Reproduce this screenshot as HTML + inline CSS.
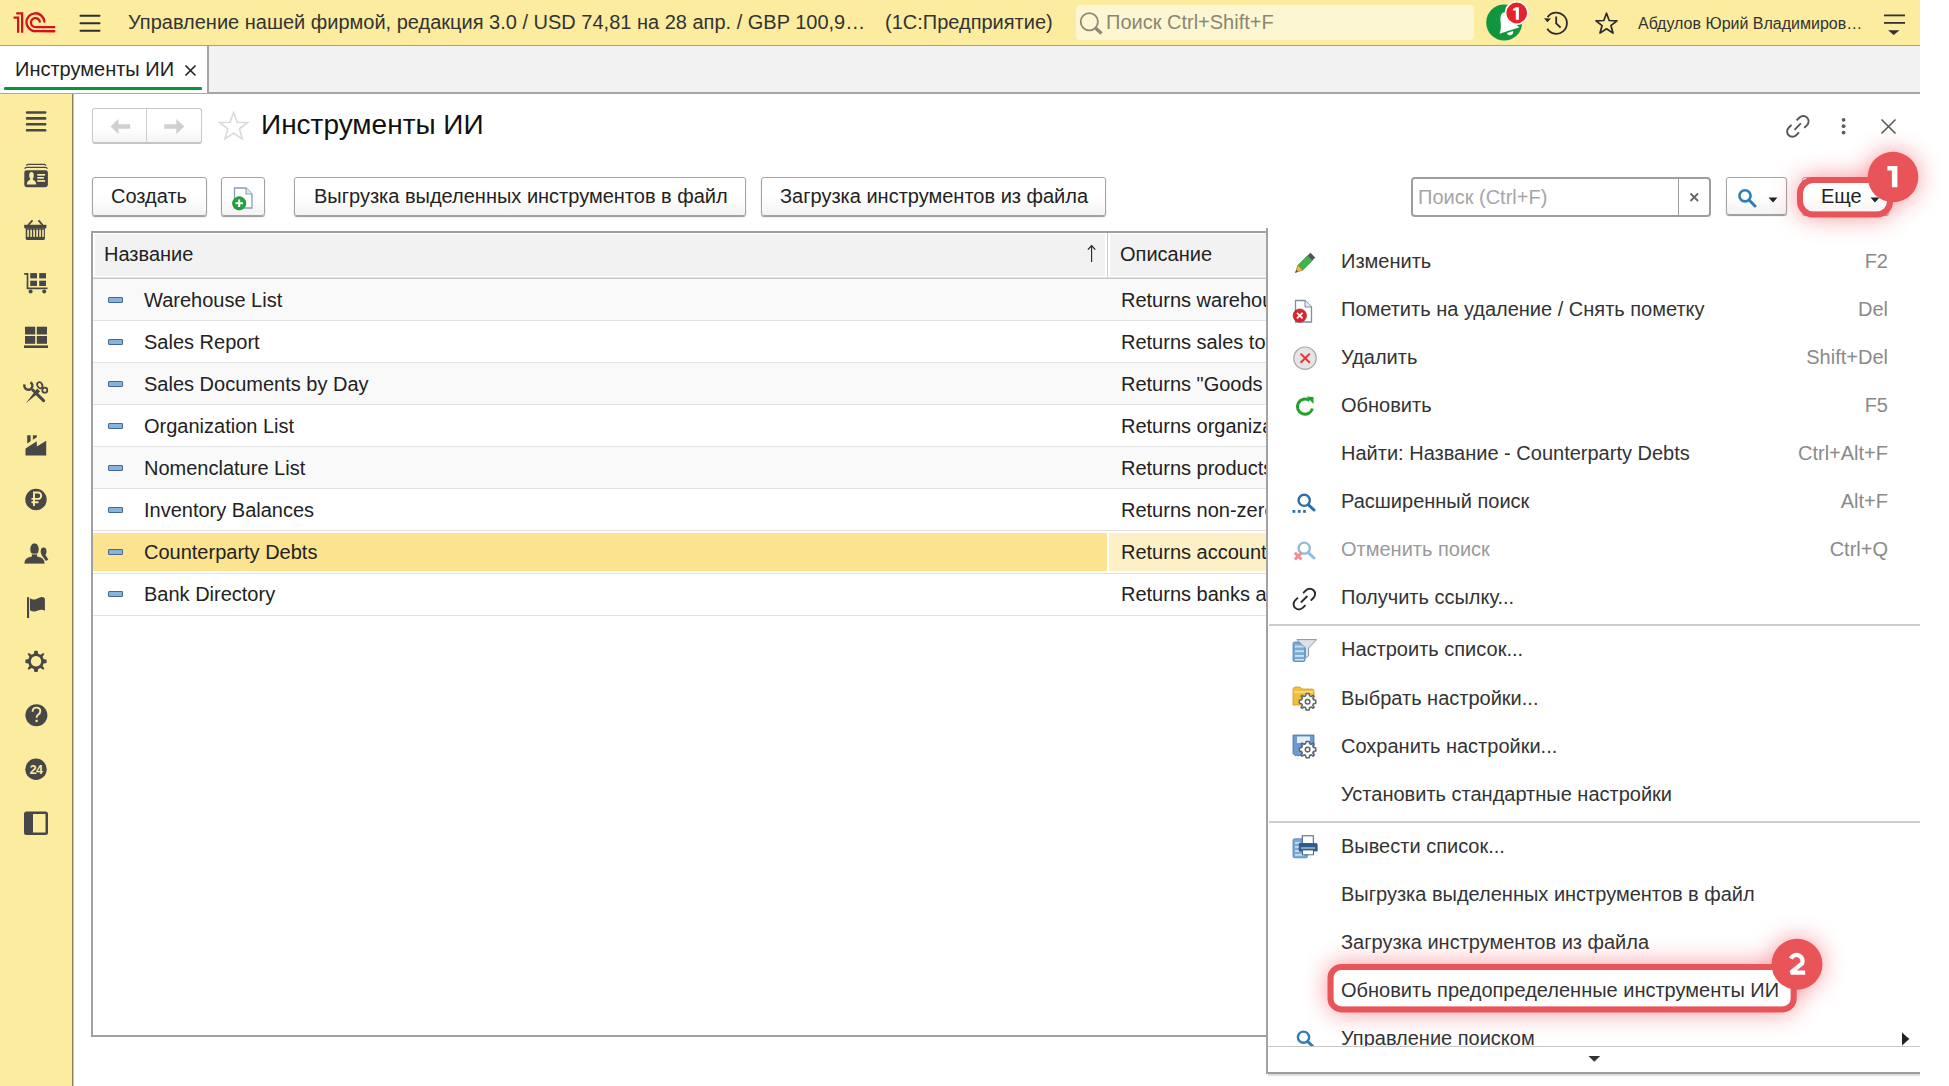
<!DOCTYPE html>
<html><head><meta charset="utf-8">
<style>
*{box-sizing:border-box;margin:0;padding:0}
html,body{width:1949px;height:1086px;overflow:hidden;background:#fff;font-family:"Liberation Sans",sans-serif;color:#333}
.a{position:absolute}
.t{position:absolute;white-space:nowrap;line-height:20px;font-size:20px}
#top{left:0;top:0;width:1920px;height:46px;background:#FBEC9F;border-bottom:1px solid #ADA26B}
#tabs{left:0;top:46px;width:1920px;height:48px;background:#F2F2F2;border-bottom:2px solid #A6A6A6}
#tab1{left:0;top:46px;width:209px;height:47px;background:#fff;border-right:2px solid #A6A6A6}
#side{left:0;top:94px;width:73px;height:992px;background:#FBEC9F;border-right:1px solid #8C8352;box-shadow:1px 0 0 #C9C3A0}
.btn{position:absolute;border:1px solid #A3A3A3;border-radius:3px;background:linear-gradient(#fff,#fff 50%,#F3F3F3);box-shadow:0 1px 1px #959595}
.row{position:absolute;left:93px;width:1174px;height:42px;border-bottom:1px solid #E3E3E3}
.dash{position:absolute;left:108px;width:15px;height:6px;background:#88B3DC;border:1px solid #436A8E;border-radius:1px}
.mi{position:absolute;left:1342px;white-space:nowrap;font-size:20px;line-height:20px;color:#333}
.sc{position:absolute;right:62px;white-space:nowrap;font-size:20px;line-height:20px;color:#8A8A8A;text-align:right}
.ic{position:absolute;fill:#4A4A4A}
</style></head>
<body>
<!-- TOP BAR -->
<div id="top" class="a"></div>
<div class="t" style="left:128px;top:12px;color:#333">Управление нашей фирмой, редакция 3.0 / USD 74,81 на 28 апр. / GBP 100,9…</div>
<div class="t" style="left:885px;top:12px;color:#333">(1С:Предприятие)</div>
<div class="a" style="left:1076px;top:5px;width:398px;height:35px;background:#FDF6D3;border-radius:4px"></div>
<div class="t" style="left:1106px;top:12px;color:#8C8670">Поиск Ctrl+Shift+F</div>
<div class="t" style="left:1638px;top:16px;font-size:16px;line-height:16px;color:#333">Абдулов Юрий Владимиров…</div>

<!-- TABS -->
<div id="tabs" class="a"></div>
<div id="tab1" class="a"></div>
<div class="t" style="left:15px;top:59px;color:#222">Инструменты ИИ</div>
<div class="a" style="left:4px;top:87px;width:198px;height:3px;background:#05963C;border-radius:1px"></div>

<!-- SIDEBAR -->
<div id="side" class="a"></div>
<!-- SIDEBAR ICONS -->
<svg class="a" style="left:0;top:0" width="80" height="1086" viewBox="0 0 80 1086">
<g fill="#474747">
<!-- hamburger 4 -->
<rect x="25.8" y="111.2" width="20.6" height="2.6" rx="1.2"/>
<rect x="25.8" y="117.1" width="20.6" height="2.6" rx="1.2"/>
<rect x="25.8" y="123" width="20.6" height="2.6" rx="1.2"/>
<rect x="25.8" y="129" width="20.6" height="2.6" rx="1.2"/>
<!-- card -->
<path d="M26.4,165.6 Q26.8,164.3 28.3,164.3 H44.2 Q45.6,164.3 46,165.6" fill="none" stroke="#474747" stroke-width="1.3"/>
<path d="M24.6,168.6 Q25.3,167.4 26.8,167.4 H45.3 Q46.8,167.4 47.5,168.6" fill="none" stroke="#474747" stroke-width="1.3"/>
<rect x="24.3" y="170.2" width="23.6" height="17" rx="2.4"/>
<!-- basket -->
<path d="M28.3,225 L32.5,220.3 M42.6,225 L38.5,220.3" stroke="#474747" stroke-width="1.8" fill="none"/>
<rect x="24.2" y="224.8" width="22.2" height="3.6" rx="0.8"/>
<path d="M25.7,228.2 H44.9 V238.4 Q44.9,239.9 43.4,239.9 H27.2 Q25.7,239.9 25.7,238.4 Z"/>
<!-- cart -->
<path d="M24.2,273.9 H27.5 V288.4 H47.5" fill="none" stroke="#474747" stroke-width="1.7"/>
<rect x="30.2" y="273.1" width="6.8" height="5.3"/>
<rect x="39.2" y="273.1" width="6.8" height="5.3"/>
<rect x="30.2" y="280.7" width="6.8" height="5.3"/>
<rect x="39.2" y="280.7" width="6.8" height="5.3"/>
<circle cx="30.6" cy="291.6" r="2"/>
<circle cx="44.2" cy="291.6" r="2"/>
<!-- shelf -->
<rect x="25" y="326.7" width="10.2" height="7.8"/>
<rect x="36.8" y="326.7" width="10.2" height="7.8"/>
<rect x="25" y="336" width="10.2" height="7.8"/>
<rect x="36.8" y="336" width="10.2" height="7.8"/>
<rect x="24" y="345.4" width="24" height="2.6"/>
<!-- tools -->
<path d="M24.6,384.4 A4,4 0 1 0 30.4,382.3" fill="none" stroke="#474747" stroke-width="2.5"/>
<path d="M32.8,390 L43.6,400.6" fill="none" stroke="#474747" stroke-width="3" stroke-linecap="round"/>
<ellipse cx="39.8" cy="385.2" rx="2.4" ry="3.2" transform="rotate(-30 39.8 385.2)" fill="none" stroke="#474747" stroke-width="1.8"/>
<circle cx="44.8" cy="390.2" r="2.5" fill="none" stroke="#474747" stroke-width="1.8"/>
<path d="M25.8,403.2 L37.2,388.6 L40.2,391.6 Z"/>
<!-- factory -->
<path d="M25.5,455.6 V448.5 L36.8,441.3 V446.6 L46.2,440.8 V455.6 Z"/>
<path d="M27.2,435.3 H30.6 V441.2 L27.2,443.4 Z"/>
<path d="M32.9,435.3 H36.8 V437.3 L32.9,439.8 Z"/>
<!-- ruble -->
<circle cx="36" cy="499.5" r="10.7"/>
<!-- people -->
<ellipse cx="43.6" cy="551.5" rx="2.9" ry="4.1"/>
<path d="M41.5,555 L45.5,555 L48.3,559.5 L46,561 Z"/>
<ellipse cx="34.5" cy="549.2" rx="4.6" ry="6.3" stroke="#FBEC9F" stroke-width="0.8"/>
<path d="M31.5,554 H37.5 V556.3 Q44.3,557.3 44.9,562.5 V564 H24.1 V562.5 Q24.7,557.3 31.5,556.3 Z" stroke="#FBEC9F" stroke-width="0.8"/>
<!-- flag -->
<rect x="27" y="597.2" width="2.1" height="20.8"/>
<path d="M30,598.2 Q33,600 35.7,599.2 Q38,598 40.5,597.2 Q43,596.8 44.9,598.5 V610.8 Q43,609.5 40.5,609.8 Q38,610.3 35.7,611.3 Q33,612 30,610.3 Z"/>
<!-- help -->
<circle cx="36.4" cy="715.2" r="11"/>
<!-- 24 -->
<circle cx="36" cy="769.2" r="10.7"/>
<!-- panel -->
<path d="M26.5,811.5 H45.5 A2.5,2.5 0 0 1 48,814 V832.5 A2.5,2.5 0 0 1 45.5,835 H26.5 A2.5,2.5 0 0 1 24,832.5 V814 A2.5,2.5 0 0 1 26.5,811.5 Z M33,814 V832.5 H45.5 V814 Z" fill-rule="evenodd"/>
</g>
<!-- card inner -->
<g fill="#FBEC9F">
<ellipse cx="31.5" cy="175.6" rx="2.3" ry="3.5"/>
<path d="M30.3,178.5 H32.7 L33,179.8 Q36,180.8 36.2,184.4 H26.8 Q27,180.8 30,179.8 Z"/>
<rect x="37.3" y="174" width="7.8" height="1.7"/>
<rect x="37.3" y="177" width="6.6" height="1.7"/>
<rect x="37.3" y="180.1" width="7.8" height="1.7"/>
<!-- basket slots -->
<rect x="27.3" y="229.7" width="1.6" height="7.2"/>
<rect x="30.3" y="229.7" width="1.6" height="7.2"/>
<rect x="33.3" y="229.7" width="1.6" height="7.2"/>
<rect x="36.3" y="229.7" width="1.6" height="7.2"/>
<rect x="39.3" y="229.7" width="1.6" height="7.2"/>
<rect x="42.2" y="229.7" width="1.6" height="7.2"/>
</g>
<!-- ruble glyph -->
<path d="M34,506 V492.5 H38 A3.2,3.2 0 0 1 38,498.9 H31.5 M31.5,502.2 H38.5" fill="none" stroke="#FBEC9F" stroke-width="1.9"/>
<!-- gear -->
<g transform="translate(36,661.3)">
<path d="M-1.6,-10.6 H1.6 L2.2,-7.6 L4.6,-6.6 L7.2,-8.4 L8.4,-7.2 L6.6,-4.6 L7.6,-2.2 L10.6,-1.6 V1.6 L7.6,2.2 L6.6,4.6 L8.4,7.2 L7.2,8.4 L4.6,6.6 L2.2,7.6 L1.6,10.6 H-1.6 L-2.2,7.6 L-4.6,6.6 L-7.2,8.4 L-8.4,7.2 L-6.6,4.6 L-7.6,2.2 L-10.6,1.6 V-1.6 L-7.6,-2.2 L-6.6,-4.6 L-8.4,-7.2 L-7.2,-8.4 L-4.6,-6.6 L-2.2,-7.6 Z M0,-5.2 A5.2,5.2 0 1 0 0.01,-5.2 Z" fill="#474747" fill-rule="evenodd"/>
</g>
<!-- help glyph -->
<path d="M32.6,711.8 Q32.6,707.6 36.5,707.6 Q40.3,707.6 40.3,711.3 Q40.3,713.3 38.3,714.5 Q36.6,715.6 36.6,717.8" fill="none" stroke="#FBEC9F" stroke-width="1.9"/>
<rect x="35.5" y="719.8" width="2.2" height="2.2" fill="#FBEC9F"/>
<text x="36" y="774" font-family="Liberation Sans" font-weight="bold" font-size="12.5" fill="#FBEC9F" text-anchor="middle" letter-spacing="-0.6">24</text>
</svg>


<!-- FORM HEADER -->
<div class="t" style="left:261px;top:111px;font-size:28px;line-height:28px;color:#111">Инструменты ИИ</div>

<!-- TOOLBAR -->
<div class="btn" style="left:92px;top:177px;width:115px;height:39px"></div>
<div class="t" style="left:111px;top:186px;color:#222">Создать</div>
<div class="btn" style="left:221px;top:177px;width:44px;height:39px"></div>
<div class="btn" style="left:294px;top:177px;width:452px;height:39px"></div>
<div class="t" style="left:314px;top:186px;color:#222">Выгрузка выделенных инструментов в файл</div>
<div class="btn" style="left:761px;top:177px;width:345px;height:39px"></div>
<div class="t" style="left:780px;top:186px;color:#222">Загрузка инструментов из файла</div>

<!-- TABLE -->
<div class="a" style="left:91px;top:231px;width:1220px;height:806px;border:2px solid #A0A0A0;border-right:none"></div>
<div class="a" style="left:95px;top:234px;width:1010px;height:42px;background:#F2F2F2"></div>
<div class="a" style="left:1107px;top:233px;width:1px;height:45px;background:#CACACA"></div>
<div class="a" style="left:1110px;top:234px;width:200px;height:42px;background:#F2F2F2"></div>
<div class="a" style="left:93px;top:277px;width:1220px;height:1px;background:#E2E2E2"></div>
<div class="a" style="left:93px;top:278px;width:1220px;height:1px;background:#C6C6C6"></div>
<div class="t" style="left:104px;top:244px;color:#222">Название</div>
<div class="t" style="left:1120px;top:244px;color:#222">Описание</div>
<div class="a" style="left:93px;top:279px;width:1220px;height:41px;background:#F9F9F9"></div>
<div class="a" style="left:93px;top:320px;width:1220px;height:1px;background:#E3E3E3"></div>
<div class="dash" style="top:297px"></div>
<div class="t" style="left:144px;top:290px;color:#222">Warehouse List</div>
<div class="t" style="left:1121px;top:290px;color:#222">Returns warehouse list with addresses</div>
<div class="a" style="left:93px;top:362px;width:1220px;height:1px;background:#E3E3E3"></div>
<div class="dash" style="top:339px"></div>
<div class="t" style="left:144px;top:332px;color:#222">Sales Report</div>
<div class="t" style="left:1121px;top:332px;color:#222">Returns sales totals by period</div>
<div class="a" style="left:93px;top:363px;width:1220px;height:41px;background:#F9F9F9"></div>
<div class="a" style="left:93px;top:404px;width:1220px;height:1px;background:#E3E3E3"></div>
<div class="dash" style="top:381px"></div>
<div class="t" style="left:144px;top:374px;color:#222">Sales Documents by Day</div>
<div class="t" style="left:1121px;top:374px;color:#222">Returns "Goods and services sales" documents</div>
<div class="a" style="left:93px;top:446px;width:1220px;height:1px;background:#E3E3E3"></div>
<div class="dash" style="top:423px"></div>
<div class="t" style="left:144px;top:416px;color:#222">Organization List</div>
<div class="t" style="left:1121px;top:416px;color:#222">Returns organization list</div>
<div class="a" style="left:93px;top:447px;width:1220px;height:41px;background:#F9F9F9"></div>
<div class="a" style="left:93px;top:488px;width:1220px;height:1px;background:#E3E3E3"></div>
<div class="dash" style="top:465px"></div>
<div class="t" style="left:144px;top:458px;color:#222">Nomenclature List</div>
<div class="t" style="left:1121px;top:458px;color:#222">Returns products and services</div>
<div class="a" style="left:93px;top:530px;width:1220px;height:1px;background:#E3E3E3"></div>
<div class="dash" style="top:507px"></div>
<div class="t" style="left:144px;top:500px;color:#222">Inventory Balances</div>
<div class="t" style="left:1121px;top:500px;color:#222">Returns non-zero inventory balances</div>
<div class="a" style="left:93px;top:533px;width:1014px;height:38px;background:#FCE38F"></div>
<div class="a" style="left:1109px;top:533px;width:200px;height:38px;background:#FDF0C6"></div>
<div class="a" style="left:93px;top:573px;width:1220px;height:1px;background:#E3E3E3"></div>
<div class="dash" style="top:549px"></div>
<div class="t" style="left:144px;top:542px;color:#222">Counterparty Debts</div>
<div class="t" style="left:1121px;top:542px;color:#222">Returns accounts receivable</div>
<div class="a" style="left:93px;top:615px;width:1220px;height:1px;background:#E3E3E3"></div>
<div class="dash" style="top:591px"></div>
<div class="t" style="left:144px;top:584px;color:#222">Bank Directory</div>
<div class="t" style="left:1121px;top:584px;color:#222">Returns banks and BIC codes</div>
<!-- FORM CONTROLS -->
<div class="a" style="left:92px;top:108px;width:110px;height:36px;border:1px solid #C9C9C9;border-bottom:2px solid #C4C4C4;border-radius:3px;background:linear-gradient(#fff 55%,#F4F4F4)"></div>
<div class="a" style="left:146px;top:109px;width:1px;height:34px;background:#CFCFCF"></div>
<div class="a" style="left:1411px;top:177px;width:300px;height:40px;border:2px solid #9E9E9E;border-radius:4px;background:#fff"></div>
<div class="a" style="left:1678px;top:179px;width:1px;height:36px;background:#A0A0A0"></div>
<div class="t" style="left:1418px;top:187px;color:#A6A6A6">Поиск (Ctrl+F)</div>
<div class="btn" style="left:1726px;top:177px;width:61px;height:38px"></div>
<div class="btn" style="left:1802px;top:177px;width:87px;height:38px"></div>
<div class="t" style="left:1821px;top:186px;color:#222">Еще</div>
<svg class="a" style="left:0;top:0" width="1949" height="300" viewBox="0 0 1949 300">
<!-- nav arrows -->
<g fill="#CFCFCF">
<path d="M110.5,126.5 L118.5,119 V124.3 H130.2 V128.7 H118.5 V134 Z"/>
<path d="M184.3,126.5 L176.3,119 V124.3 H164.3 V128.7 H176.3 V134 Z"/>
</g>
<!-- star light -->
<path d="M233.6,112.5 L237.2,122.2 L247.5,122.5 L239.4,128.9 L242.2,138.9 L233.6,133.2 L225,138.9 L227.8,128.9 L219.7,122.5 L230,122.2 Z" fill="none" stroke="#D9D9D9" stroke-width="1.6"/>
<!-- link icon form -->
<g fill="none" stroke="#555" stroke-width="1.9" stroke-linecap="butt">
<path d="M1796.6,120.4 L1799.55,117.55 A5.3,5.3 0 0 1 1807.05,125.05 L1804.2,127.9"/>
<path d="M1799,132.4 L1796.15,135.25 A5.3,5.3 0 0 1 1788.65,127.75 L1791.5,124.9"/>
<path d="M1794.4,129.8 L1800.9,123.3"/>
</g>
<g fill="#5A5A5A">
<circle cx="1843.6" cy="119.8" r="1.9"/>
<circle cx="1843.6" cy="126.2" r="1.9"/>
<circle cx="1843.6" cy="132.6" r="1.9"/>
</g>
<path d="M1881.5,119.5 L1895.5,133.5 M1895.5,119.5 L1881.5,133.5" stroke="#5A5A5A" stroke-width="1.6" fill="none"/>
<!-- doc plus icon -->
<path d="M234.5,188 H246 L252,194 V208 H234.5 Z" fill="#fff" stroke="#8A9BB0" stroke-width="1.3"/>
<path d="M246,188 V194 H252" fill="#E6ECF3" stroke="#8A9BB0" stroke-width="1.1"/>
<circle cx="239.2" cy="203.3" r="6.6" fill="#1FA33A" stroke="#0E8A2A" stroke-width="0.8"/>
<path d="M235.5,203.3 H243 M239.2,199.6 V207" stroke="#fff" stroke-width="2"/>
<!-- search clear x -->
<path d="M1690.5,193.5 L1698,201 M1698,193.5 L1690.5,201" stroke="#666" stroke-width="1.8"/>
<!-- search button magnifier -->
<circle cx="1745" cy="195.8" r="5.6" fill="none" stroke="#2F7DB8" stroke-width="2.6"/>
<path d="M1749.3,200.3 L1755,206" stroke="#2F7DB8" stroke-width="3" stroke-linecap="round"/>
<path d="M1768.5,197.5 H1777.5 L1773,202.5 Z" fill="#222"/>
<path d="M1870.5,197.5 H1879.5 L1875,202.5 Z" fill="#222"/>
<!-- sort arrow -->
<path d="M1091.6,245.8 V262" stroke="#222" stroke-width="1.1"/>
<path d="M1087.9,249.6 L1091.6,245.6 L1095.3,249.6" stroke="#222" stroke-width="1.2" fill="none"/>
</svg>

<!-- MENU -->
<div class="a" style="left:1266px;top:228px;width:654px;height:846px;background:#fff;border-left:2px solid #A3A3A3;border-bottom:2px solid #9C9C9C"></div>
<div class="a" style="left:1268px;top:230px;width:652px;height:816px;overflow:hidden">
<div class="t" style="left:73px;top:21px;color:#333">Изменить</div>
<div class="t" style="right:32px;top:21px;color:#8A8A8A">F2</div>
<div class="t" style="left:73px;top:69px;color:#333">Пометить на удаление / Снять пометку</div>
<div class="t" style="right:32px;top:69px;color:#8A8A8A">Del</div>
<div class="t" style="left:73px;top:117px;color:#333">Удалить</div>
<div class="t" style="right:32px;top:117px;color:#8A8A8A">Shift+Del</div>
<div class="t" style="left:73px;top:165px;color:#333">Обновить</div>
<div class="t" style="right:32px;top:165px;color:#8A8A8A">F5</div>
<div class="t" style="left:73px;top:213px;color:#333">Найти: Название - Counterparty Debts</div>
<div class="t" style="right:32px;top:213px;color:#8A8A8A">Ctrl+Alt+F</div>
<div class="t" style="left:73px;top:261px;color:#333">Расширенный поиск</div>
<div class="t" style="right:32px;top:261px;color:#8A8A8A">Alt+F</div>
<div class="t" style="left:73px;top:309px;color:#9A9A9A">Отменить поиск</div>
<div class="t" style="right:32px;top:309px;color:#8A8A8A">Ctrl+Q</div>
<div class="t" style="left:73px;top:357px;color:#333">Получить ссылку...</div>
<div class="t" style="left:73px;top:409px;color:#333">Настроить список...</div>
<div class="t" style="left:73px;top:458px;color:#333">Выбрать настройки...</div>
<div class="t" style="left:73px;top:506px;color:#333">Сохранить настройки...</div>
<div class="t" style="left:73px;top:554px;color:#333">Установить стандартные настройки</div>
<div class="t" style="left:73px;top:606px;color:#333">Вывести список...</div>
<div class="t" style="left:73px;top:654px;color:#333">Выгрузка выделенных инструментов в файл</div>
<div class="t" style="left:73px;top:702px;color:#333">Загрузка инструментов из файла</div>
<div class="t" style="left:73px;top:750px;color:#333">Обновить предопределенные инструменты ИИ</div>
<div class="t" style="left:73px;top:798px;color:#333">Управление поиском</div>
</div>
<div class="a" style="left:1269px;top:624px;width:651px;height:2px;background:#CDCDCD"></div>
<div class="a" style="left:1269px;top:821px;width:651px;height:2px;background:#CDCDCD"></div>
<div class="a" style="left:1268px;top:1046px;width:652px;height:1px;background:#C8C8C8"></div>
<div class="a" style="left:1268px;top:1074px;width:652px;height:3px;background:linear-gradient(rgba(0,0,0,0.18),rgba(0,0,0,0))"></div>
<!-- MENU ICONS -->
<svg class="a" style="left:1268px;top:230px" width="652" height="816" viewBox="1268 230 652 816">
<!-- pencil -->
<g transform="translate(1303.5,264.5) rotate(-45)">
<rect x="-4.5" y="-3.4" width="13.5" height="6.8" fill="#3DB54A" stroke="#2E7D32" stroke-width="0.6"/>
<rect x="9" y="-3.4" width="4.2" height="6.8" fill="#4A5560"/>
<path d="M-4.5,-3.4 L-11.2,0 L-4.5,3.4 Z" fill="#F4B63F" stroke="#9C6B1E" stroke-width="0.6"/>
<path d="M-8.8,-1.2 L-12,0 L-8.8,1.2 Z" fill="#555"/>
</g>
<!-- mark delete doc -->
<path d="M1295.5,300.5 H1305 L1311.5,307 V322 H1295.5 Z" fill="#fff" stroke="#7E8FA6" stroke-width="1.3"/>
<path d="M1305,300.5 V307 H1311.5" fill="#E8EDF3" stroke="#7E8FA6" stroke-width="1"/>
<circle cx="1299.8" cy="315.6" r="6.7" fill="#D8262E" stroke="#B01820" stroke-width="0.6"/>
<path d="M1297,312.8 L1302.6,318.4 M1302.6,312.8 L1297,318.4" stroke="#fff" stroke-width="1.7"/>
<!-- delete -->
<circle cx="1305" cy="358.2" r="11.2" fill="#E5E5E5" stroke="#A9A9A9" stroke-width="1.2"/>
<path d="M1300.6,353.6 L1309.8,362.8 M1309.8,353.6 L1300.6,362.8" stroke="#E8303C" stroke-width="2"/>
<!-- refresh -->
<path d="M1312.4,408.5 A7.6,7.6 0 1 1 1309.5,400.5" fill="none" stroke="#21A12C" stroke-width="3"/>
<path d="M1306.5,396.5 L1313.5,397 L1313.5,404 Z" fill="#21A12C"/>
<!-- adv search -->
<circle cx="1304.2" cy="500.3" r="5.6" fill="none" stroke="#2D6FA8" stroke-width="2.4"/>
<path d="M1308.5,504.8 L1314,510" stroke="#2D6FA8" stroke-width="3" stroke-linecap="round"/>
<rect x="1292.5" y="510" width="2.8" height="2.8" fill="#2D6FA8"/>
<rect x="1297.8" y="510" width="2.8" height="2.8" fill="#2D6FA8"/>
<rect x="1303.1" y="510" width="2.8" height="2.8" fill="#2D6FA8"/>
<!-- cancel search -->
<circle cx="1304.2" cy="548.2" r="5.6" fill="none" stroke="#93BCDD" stroke-width="2.4"/>
<path d="M1308.5,552.8 L1314,558" stroke="#93BCDD" stroke-width="3" stroke-linecap="round"/>
<path d="M1294.8,552.8 L1301.5,559.5 M1301.5,552.8 L1294.8,559.5" stroke="#EE8E98" stroke-width="3"/>
<!-- link -->
<g fill="none" stroke="#2A2A2A" stroke-width="1.9" stroke-linecap="butt" transform="translate(-493.5,472.7)">
<path d="M1796.6,120.4 L1799.55,117.55 A5.3,5.3 0 0 1 1807.05,125.05 L1804.2,127.9"/>
<path d="M1799,132.4 L1796.15,135.25 A5.3,5.3 0 0 1 1788.65,127.75 L1791.5,124.9"/>
<path d="M1794.4,129.8 L1800.9,123.3"/>
</g>
<!-- filter list -->
<g>
<rect x="1293" y="642" width="12" height="19.5" rx="1.5" fill="#79A9D6" stroke="#4F80B0" stroke-width="0.8"/>
<rect x="1295" y="645.5" width="9" height="2" fill="#C6DDF3"/>
<rect x="1295" y="650.2" width="9" height="2" fill="#C6DDF3"/>
<rect x="1295" y="654.9" width="9" height="2" fill="#C6DDF3"/>
<rect x="1295" y="659" width="9" height="1.5" fill="#C6DDF3"/>
<path d="M1296.8,639.6 H1316.6 L1308.6,648 V656 L1305.5,658 V648 Z" fill="#DCE2E8" stroke="#8A96A3" stroke-width="1"/>
</g>
<!-- folder gear -->
<path d="M1293,689.5 Q1293,687 1295.5,687 H1300 L1302,689 H1312 Q1314,689 1314,691 V705 H1293 Z" fill="#F2BE3A" stroke="#D39A1E" stroke-width="0.8"/>
<path d="M1294,692 H1313" stroke="#FBE08C" stroke-width="1.5"/>
<!-- floppy gear -->
<path d="M1293,735 H1314 V755.6 H1295 L1293,753.6 Z" fill="#6A9BD1" stroke="#3F72A8" stroke-width="0.8"/>
<rect x="1297" y="736.5" width="13" height="6.5" fill="#E4EEF8"/>
<g id="gearA">
<g transform="translate(1307.6,701.8)">
<path d="M-1.5,-8.2 H1.5 L2,-5.9 L3.6,-5.2 L5.6,-6.5 L6.5,-5.6 L5.2,-3.6 L5.9,-2 L8.2,-1.5 V1.5 L5.9,2 L5.2,3.6 L6.5,5.6 L5.6,6.5 L3.6,5.2 L2,5.9 L1.5,8.2 H-1.5 L-2,5.9 L-3.6,5.2 L-5.6,6.5 L-6.5,5.6 L-5.2,3.6 L-5.9,2 L-8.2,1.5 V-1.5 L-5.9,-2 L-5.2,-3.6 L-6.5,-5.6 L-5.6,-6.5 L-3.6,-5.2 L-2,-5.9 Z" fill="#fff" stroke="#5E6670" stroke-width="1.5" stroke-linejoin="round"/>
<circle r="2.3" fill="none" stroke="#5E6670" stroke-width="1.5"/>
</g>
</g>
<g transform="translate(1307.6,749.6)">
<path d="M-1.5,-8.2 H1.5 L2,-5.9 L3.6,-5.2 L5.6,-6.5 L6.5,-5.6 L5.2,-3.6 L5.9,-2 L8.2,-1.5 V1.5 L5.9,2 L5.2,3.6 L6.5,5.6 L5.6,6.5 L3.6,5.2 L2,5.9 L1.5,8.2 H-1.5 L-2,5.9 L-3.6,5.2 L-5.6,6.5 L-6.5,5.6 L-5.2,3.6 L-5.9,2 L-8.2,1.5 V-1.5 L-5.9,-2 L-5.2,-3.6 L-6.5,-5.6 L-5.6,-6.5 L-3.6,-5.2 L-2,-5.9 Z" fill="#fff" stroke="#5E6670" stroke-width="1.5" stroke-linejoin="round"/>
<circle r="2.3" fill="none" stroke="#5E6670" stroke-width="1.5"/>
</g>
<!-- printer list -->
<rect x="1293" y="838.8" width="14.5" height="19" rx="1.5" fill="#79A9D6" stroke="#4F80B0" stroke-width="0.8"/>
<rect x="1295" y="842" width="5" height="1.8" fill="#C6DDF3"/>
<rect x="1295" y="846" width="5" height="1.8" fill="#C6DDF3"/>
<rect x="1295" y="850" width="5" height="1.8" fill="#C6DDF3"/>
<rect x="1295" y="854" width="9" height="1.8" fill="#C6DDF3"/>
<rect x="1302.3" y="835.8" width="11" height="8" fill="#fff" stroke="#3E5F80" stroke-width="1"/>
<path d="M1299.2,843.5 H1316.5 Q1317.2,843.5 1317.2,845 V851 H1299.2 Z" fill="#2F5C88" stroke="#2F5C88" stroke-width="0.8"/>
<path d="M1301,848 H1315" stroke="#C8D4E0" stroke-width="1.2"/>
<rect x="1302.5" y="850" width="11" height="4.8" fill="#fff" stroke="#3E5F80" stroke-width="0.9"/>
<!-- search manage -->
<circle cx="1303.5" cy="1037.2" r="5.6" fill="none" stroke="#2F7DB5" stroke-width="2.4"/>
<path d="M1307.8,1041.7 L1313,1046.5" stroke="#2F7DB5" stroke-width="3"/>
</svg>
<svg class="a" style="left:0;top:0" width="1949" height="1086" viewBox="0 0 1949 1086">
<path d="M1902,1032.5 L1909.3,1039 L1902,1045.5 Z" fill="#222"/>
<path d="M1588.5,1056 H1600.2 L1594.3,1061.8 Z" fill="#333"/>
</svg>

<!-- ICONS LAYER 1 -->
<svg class="a" style="left:0;top:0" width="1949" height="1086" viewBox="0 0 1949 1086">
<!-- 1C logo -->
<g fill="none" stroke="#D6111B" stroke-width="2.25" stroke-linecap="round" stroke-linejoin="miter">
<path d="M14.4,17.5 H18.15 V31.9"/>
<path d="M17.1,13.4 H22.15 V31.9"/>
</g>
<g fill="none" stroke="#D6111B" stroke-width="2.35">
<path d="M44.3,21.5 A8.95,8.95 0 1 0 35.45,31.2 H54.3" stroke-linecap="round"/>
<path d="M39.8,21.5 A4.5,4.5 0 1 0 35.5,27.1 H54.3" stroke-linecap="round"/>
</g>
<!-- hamburger top -->
<g fill="#2E2E2E">
<rect x="79.5" y="14.8" width="21" height="2" rx="1"/>
<rect x="79.5" y="22.3" width="21" height="2" rx="1"/>
<rect x="79.5" y="29.8" width="21" height="2" rx="1"/>
</g>
<!-- top search magnifier -->
<g fill="none" stroke="#8E8872">
<circle cx="1089.3" cy="21.8" r="8.6" stroke-width="1.8"/>
<path d="M1095.5,28 L1101.5,33.5" stroke-width="3.2"/>
</g>
<!-- bell -->
<circle cx="1504.2" cy="22.5" r="18" fill="#11963F"/>
<g transform="translate(1507,23) rotate(-18)">
<path d="M-10.5,8 C-8,5 -6.5,1 -5.5,-4 C-4.5,-9 -2,-11 0,-11 C2,-11 4.5,-9 5.5,-4 C6.5,1 8,5 10.5,8 Z" fill="#fff"/>
<path d="M-3.2,9.5 A3.2,3.2 0 0 0 3.2,9.5 Z" fill="#fff"/>
</g>
<circle cx="1516.7" cy="13" r="11.2" fill="#E8222B" stroke="#fff" stroke-width="1.6"/>
<path d="M1515.6,7.3 H1518.9 V19.7 H1515.8 V10.4 H1513 V8.6 Q1515,8.4 1515.6,7.3 Z" fill="#fff"/>
<!-- history -->
<g fill="none" stroke="#2A2A2A" stroke-width="1.8">
<path d="M1547.6,17.2 A10.6,10.6 0 1 1 1547.3,28.8"/>
<path d="M1556.2,16.6 V23.3 L1560.6,27.6"/>
</g>
<path d="M1544,18.2 L1551,18.6 L1547.3,22.3 Z" fill="#2A2A2A"/>
<!-- star top -->
<path d="M1606.5,13.2 L1609.2,20.5 L1617.0,20.8 L1610.9,25.6 L1613.0,33.1 L1606.5,28.8 L1600.0,33.1 L1602.1,25.6 L1596.0,20.8 L1603.8,20.5 Z" fill="none" stroke="#2A2A2A" stroke-width="1.7" stroke-linejoin="round"/>
<!-- top filter icon -->
<g fill="#333">
<rect x="1884" y="14.5" width="21" height="1.8"/>
<rect x="1884" y="22" width="21" height="1.8"/>
<path d="M1888,30.2 H1899.5 L1893.7,35 Z"/>
</g>
<!-- tab close -->
<path d="M185.5,65.5 L195.5,75.5 M195.5,65.5 L185.5,75.5" stroke="#222" stroke-width="1.6" fill="none"/>
</svg>

<!-- ANNOTATIONS -->
<svg class="a" style="left:0;top:0" width="1949" height="1086" viewBox="0 0 1949 1086">
<defs>
<filter id="blur" x="-50%" y="-100%" width="200%" height="300%"><feGaussianBlur stdDeviation="12"/></filter>
<mask id="outside" maskUnits="userSpaceOnUse" x="0" y="0" width="1949" height="1086">
<rect x="0" y="0" width="1949" height="1086" fill="#fff"/>
<rect x="1803" y="183" width="84" height="28.5" rx="10" fill="#000"/>
<rect x="1333.5" y="970" width="457.2" height="36.4" rx="8" fill="#000"/>
</mask>
</defs>
<g mask="url(#outside)" opacity="0.6">
<g filter="url(#blur)" fill="#F0505A">
<rect x="1797" y="177" width="96" height="40.5" rx="16"/>
<circle cx="1893" cy="177" r="25.3"/>
<rect x="1327.5" y="964" width="469.2" height="48.4" rx="14"/>
<circle cx="1797" cy="964.3" r="25.5"/>
</g>
</g>
<g fill="none" stroke="#E95459" stroke-width="6">
<rect x="1800" y="180" width="90" height="34.5" rx="13"/>
<rect x="1330.5" y="967" width="463.2" height="42.4" rx="11"/>
</g>
<g fill="#E95459">
<circle cx="1893" cy="177" r="25.3"/>
<circle cx="1797" cy="964.3" r="25.5"/>
</g>
<g fill="#fff">
<path d="M1887.4,166.1 H1897.4 V187.3 H1891.9 V170.6 H1887.4 Z"/>
</g>
<path d="M1790.9,958.7 A6,6 0 1 1 1802.1,963.5 L1790.9,972.6 H1805.2" fill="none" stroke="#fff" stroke-width="4.3" stroke-linejoin="miter" stroke-miterlimit="2"/>
</svg>



</body></html>
